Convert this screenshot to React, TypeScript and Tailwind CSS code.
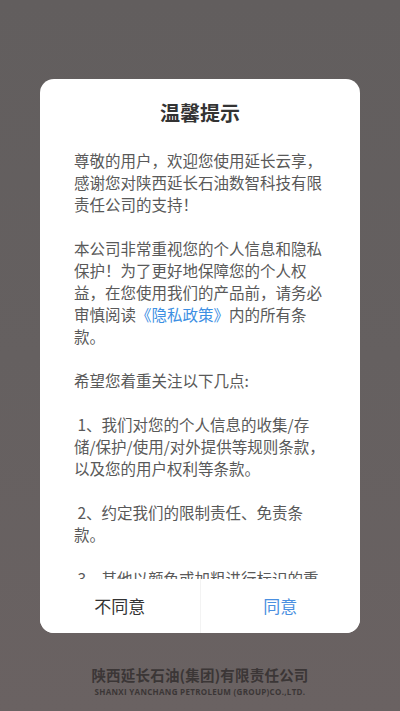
import React from "react";

const font = { fontFamily: '"Noto Sans CJK SC", "Noto Sans", sans-serif' };

type Line = { t: React.ReactNode } | null;

const lines: Line[] = [
  { t: "尊敬的用户，欢迎您使用延长云享，" },
  { t: "感谢您对陕西延长石油数智科技有限" },
  { t: "责任公司的支持！" },
  null,
  { t: "本公司非常重视您的个人信息和隐私" },
  { t: "保护！为了更好地保障您的个人权" },
  { t: "益，在您使用我们的产品前，请务必" },
  {
    t: (
      <>
        审慎阅读<span className="text-[#3d8fe3]">《隐私政策》</span>内的所有条
      </>
    ),
  },
  { t: "款。" },
  null,
  { t: "希望您着重关注以下几点:" },
  null,
  { t: "\u00a01、我们对您的个人信息的收集/存" },
  { t: "储/保护/使用/对外提供等规则条款，" },
  { t: "以及您的用户权利等条款。" },
  null,
  { t: "\u00a02、约定我们的限制责任、免责条" },
  { t: "款。" },
  null,
  { t: "\u00a03、其他以颜色或加粗进行标识的重" },
  { t: "要条款。" },
];

export default function App() {
  return (
    <div
      className="w-[400px] h-[711px] flex flex-col items-center bg-gradient-to-b from-[#625e5e] via-[#656060] to-[#6a6262] overflow-hidden"
      style={font}
    >
      <div className="mt-[79px] w-[320px] h-[554px] bg-white rounded-[14px] flex flex-col overflow-hidden">
        <div className="pt-[20px] text-center text-[20px] leading-[28px] font-bold text-[#333333]">
          温馨提示
        </div>
        <div className="mt-[22px] flex-1 overflow-hidden px-[34px] text-[15.5px] leading-[22px] text-[#595959] whitespace-nowrap">
          {lines.map((l, i) =>
            l ? (
              <div key={i} className="h-[22px]">
                {l.t}
              </div>
            ) : (
              <div key={i} className="h-[22px]" />
            )
          )}
        </div>
        <div className="h-[54px] flex shrink-0 bg-white">
          <div className="flex-1 flex items-center justify-center text-[17px] text-[#333333]">
            不同意
          </div>
          <div className="w-px bg-[#f3f3f3]" />
          <div className="flex-1 flex items-center justify-center text-[17px] text-[#4a8fe0]">
            同意
          </div>
        </div>
      </div>
      <div className="mt-[32px] flex flex-col items-center">
        <div className="text-[14.5px] leading-[20px] font-bold text-[#3b3636] tracking-[0.2px]">
          陕西延长石油(集团)有限责任公司
        </div>
        <div
          className="mt-[1px] text-[8px] leading-[12px] font-bold text-[#3b3636] tracking-[0.3px]"
          style={{ fontFamily: '"Open Sans", "Liberation Sans", sans-serif' }}
        >
          SHANXI YANCHANG PETROLEUM (GROUP)CO.,LTD.
        </div>
      </div>
    </div>
  );
}
